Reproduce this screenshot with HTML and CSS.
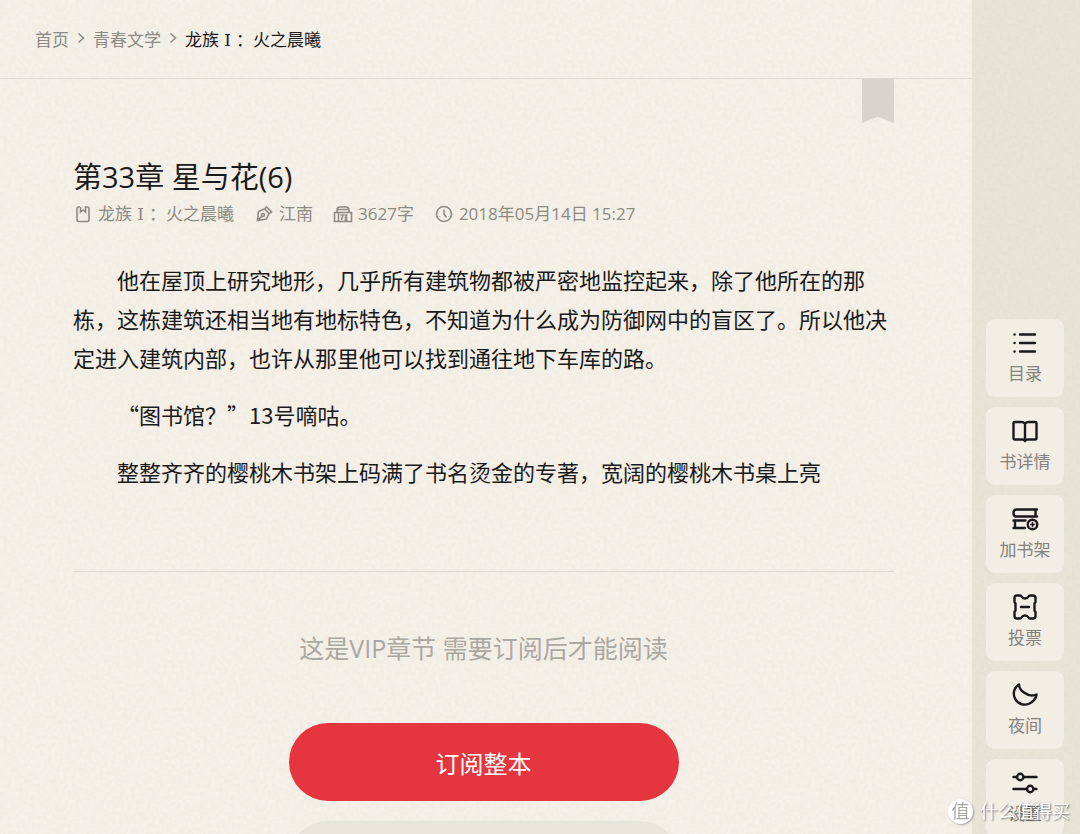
FILE: index.html
```html
<!DOCTYPE html>
<html lang="zh-CN">
<head>
<meta charset="UTF-8">
<meta name="viewport" content="width=device-width, initial-scale=1.0">
<title>第33章 星与花(6)</title>
<link rel="stylesheet" href="styles.css">
</head>
<body>
<div class="page">
    <main class="reader">
        <nav class="crumbs">
            <a href="#">首页</a>
            <svg width="8" height="12" viewBox="0 0 8 12"><path d="M1.500 1.500 6.500 6l-5 4.500"/></svg>
            <a href="#">青春文学</a>
            <svg width="8" height="12" viewBox="0 0 8 12"><path d="M1.500 1.500 6.500 6l-5 4.500"/></svg>
            <a href="#" class="current">龙族<span class="numeral">Ⅰ</span>：火之晨曦</a>
        </nav>

        <article class="chapter">
            <button class="bookmark" aria-label="书签"></button>
            <h1>第33章 星与花(6)</h1>
            <div class="meta">
                <a href="#">
                    <svg width="20" height="20" viewBox="0 0 20 20"><path d="M7 3H5.500Q4 3 4 4.500v11.500Q4 17.500 5.500 17.500h9q1.500 0 1.500-1.500V4.500Q16 3 14.500 3H12.500v5L10 6 7.500 8V3"/></svg>
                    <span>龙族<span class="numeral">Ⅰ</span>：火之晨曦</span>
                </a>
                <a href="#">
                    <svg width="20" height="20" viewBox="0 0 20 20"><path d="M3.500 16.500 4.500 7.500l6-2.500 4.500 4.500-2.500 5.500zM10.500 5l2-2 5 5-2.500 2M3.500 16.500l4.500-4.500"/><circle cx="9" cy="11" r="1.500"/></svg>
                    江南
                </a>
                <span>
                    <svg width="20" height="20" viewBox="0 0 20 20"><path d="M4 8.500V6q0-3 3-3h6q3 0 3 3v2.500M4.500 5.500h11M1.500 8.500h17v9h-17zM5.500 8.500v9M7.500 11h2.500l-1.500 5M11.500 11h3M13 11v5M11.500 13.500h3M11.500 16h3"/></svg>
                    3627字
                </span>
                <span>
                    <svg width="20" height="20" viewBox="0 0 20 20"><circle cx="10" cy="10" r="7.500"/><path d="M10 5.500V10l2.500 3.500"/></svg>
                    2018年05月14日 15:27
                </span>
            </div>
            <div class="content">
                <p>他在屋顶上研究地形，几乎所有建筑物都被严密地监控起来，除了他所在的那栋，这栋建筑还相当地有地标特色，不知道为什么成为防御网中的盲区了。所以他决定进入建筑内部，也许从那里他可以找到通往地下车库的路。</p>
                <p>“图书馆？”13号嘀咕。</p>
                <p>整整齐齐的樱桃木书架上码满了书名烫金的专著，宽阔的樱桃木书桌上亮</p>
            </div>
            <section class="vip">
                <p>这是VIP章节 需要订阅后才能阅读</p>
                <button class="subscribe">订阅整本</button>
                <button class="subscribe plain" aria-label="订阅本章"></button>
            </section>
        </article>
    </main>

    <aside class="tools">
        <button class="tool">
            <svg width="28" height="28" viewBox="0 0 28 28"><path d="M9 5.500h15M9 14h15M9 22.500h15M3.500 5.500h.1M3.500 14h.1M3.500 22.500h.1"/></svg>
            目录
        </button>
        <button class="tool">
            <svg width="28" height="28" viewBox="0 0 28 28"><path d="M14 6.500Q12.500 5 10.500 5H4Q2.500 5 2.500 6.500V21q0 1.500 1.500 1.500h7.500q1.500 0 2.500 1.500 1-1.500 2.500-1.500H24q1.500 0 1.500-1.500V6.500Q25.500 5 24 5h-6.500Q15.500 5 14 6.500zV23"/></svg>
            书详情
        </button>
        <button class="tool">
            <svg width="28" height="28" viewBox="0 0 28 28"><path d="M26 4.500H5.500Q2.500 4.500 2.500 8t3 3.500H26M24.500 4.500v7M14.500 15.500H2.500M4 15.500V23M2.500 23h11.500"/><circle cx="21.500" cy="19.500" r="4.800"/><path class="fine" d="M21.500 17.500v4M19.500 19.500h4"/></svg>
            加书架
        </button>
        <button class="tool">
            <svg width="28" height="28" viewBox="0 0 28 28"><path d="M6 2.500h3q1 0 1.500 1Q11.500 5.500 14 5.500t3.500-2q.5-1 1.500-1h3Q24.500 2.500 24.500 5v4l-1 1.500v7l1 1.500v4q0 2.500-2.500 2.500h-3q-1 0-1.500-1-1-2-3.500-2t-3.500 2q-.5 1-1.500 1H6Q3.500 25.500 3.500 23v-4l1-1.500v-7L3.500 9V5Q3.500 2.500 6 2.500zM10 14h8"/></svg>
            投票
        </button>
        <button class="tool">
            <svg width="28" height="28" viewBox="0 0 28 28"><path d="M8 3.500C3 6.500 1.500 12.500 4 17.500c2.500 5.500 9 7.500 14.500 5 4-2 6.500-5 7-9C22 15 17 14.500 13 11.500 10 9.500 8 7 8 3.500z"/></svg>
            夜间
        </button>
        <button class="tool">
            <svg width="28" height="28" viewBox="0 0 28 28"><path d="M2.500 8H6M12.500 8h13M2.500 20H16M22.500 20h3"/><circle cx="9.200" cy="8" r="3.200"/><circle cx="19.200" cy="20" r="3.200"/></svg>
            设置
        </button>
    </aside>
</div>

<div class="watermark"><span class="seal">值</span>什么值得买</div>
</body>
</html>
```

FILE: styles.css
```css
* {
    box-sizing: border-box;
}
body {
    margin: 0;
    background-color: #e7e4d8;
    color: #1a1a1a;
    font-family: "Open Sans", "Noto Sans CJK SC", sans-serif;
}
a {
    color: inherit;
    text-decoration: none;
}
button {
    border: none;
    padding: 0;
    font-family: inherit;
    cursor: pointer;
}
svg {
    fill: none;
    stroke: currentColor;
    flex: none;
}
.page {
    display: flex;
    height: 100vh;
    overflow: hidden;
}
/* paper grain */
.reader, .tools {
    background-image: url("data:image/svg+xml,%3Csvg xmlns='http://www.w3.org/2000/svg' width='200' height='200'%3E%3Cfilter id='n'%3E%3CfeTurbulence type='fractalNoise' baseFrequency='.25' numOctaves='2' stitchTiles='stitch'/%3E%3CfeColorMatrix values='0 0 0 0 .42 0 0 0 0 .38 0 0 0 0 .3 2 0 0 0 -.6'/%3E%3C/filter%3E%3Crect width='200' height='200' opacity='.06' filter='url(%23n)'/%3E%3C/svg%3E");
}
.reader {
    flex: 1;
    min-width: 0;
    background-color: #f5f0e8;
}
.crumbs {
    display: flex;
    align-items: center;
    gap: 8px;
    height: 79px;
    padding: 0 0 2px 35px;
    border-bottom: 1px solid #dcd9d2;
    color: #8d8a84;
    font-size: 17px;
}
.crumbs svg {
    stroke-width: 1.5;
}
.crumbs .current {
    color: #1a1a1a;
}
.numeral {
    display: inline-block;
    width: 1em;
    font-family: "DejaVu Serif", serif;
    line-height: 1;
    text-align: center;
}
.chapter {
    position: relative;
    padding: 79px 78px 0 73px;
}
.bookmark {
    position: absolute;
    top: 0;
    right: 78px;
    width: 32px;
    height: 44px;
    background-color: #d6d4cd;
    clip-path: polygon(0 0, 100% 0, 100% 100%, 50% 86%, 0 100%);
}
h1 {
    margin: 0;
    font-size: 29px;
    font-weight: 400;
    line-height: 38px;
}
.meta {
    display: flex;
    gap: 20px;
    margin-top: 4px;
    color: #8d8a84;
    font-size: 17px;
    line-height: 28px;
}
.meta > * {
    display: flex;
    align-items: center;
    gap: 5px;
}
.meta svg {
    stroke-width: 1.6;
}
.content {
    margin-top: 32px;
    padding-bottom: 80px;
    border-bottom: 1px solid #dcd9d2;
    font-family: "Noto Sans CJK SC", sans-serif;
    font-size: 22px;
    line-height: 39px;
}
.content p {
    margin: 0 0 18px;
    text-indent: 2em;
}
.content p:last-child {
    margin-bottom: 0;
}
.vip {
    display: flex;
    flex-direction: column;
    align-items: center;
    gap: 20px;
    padding-top: 56px;
}
.vip p {
    margin: 0 0 35px;
    color: #aba8a2;
    font-size: 25px;
    line-height: 40px;
}
.subscribe {
    width: 390px;
    max-width: 100%;
    height: 78px;
    border-radius: 39px;
    background-color: #e5353e;
    color: white;
    font-size: 24px;
}
.subscribe.plain {
    background-color: #e8e5dd;
}
.tools {
    display: flex;
    flex-direction: column;
    gap: 10px;
    padding: 319px 16px 0 14px;
    background-color: #e7e4d8;
}
.tool {
    display: flex;
    flex-direction: column;
    align-items: center;
    flex: none;
    gap: 4px;
    width: 78px;
    height: 78px;
    padding-top: 10px;
    border-radius: 9px;
    background-color: #f2ede5;
    color: #85827c;
    font-size: 17px;
    line-height: 26px;
}
.tool svg {
    stroke: #1a1a1a;
    stroke-width: 2.4;
    stroke-linecap: round;
    stroke-linejoin: round;
}
.tool .fine {
    stroke-width: 1.6;
}
.watermark {
    position: fixed;
    right: 10px;
    bottom: 10px;
    display: flex;
    align-items: center;
    gap: 7px;
    color: white;
    font-size: 18px;
    line-height: 25px;
    text-shadow: 1px 1px 2px rgba(0, 0, 0, 0.5);
}
.seal {
    width: 25px;
    height: 25px;
    border-radius: 50%;
    background-color: white;
    box-shadow: 1px 1px 2px rgba(0, 0, 0, 0.3);
    color: #aaa79f;
    text-align: center;
    text-shadow: none;
}
```
